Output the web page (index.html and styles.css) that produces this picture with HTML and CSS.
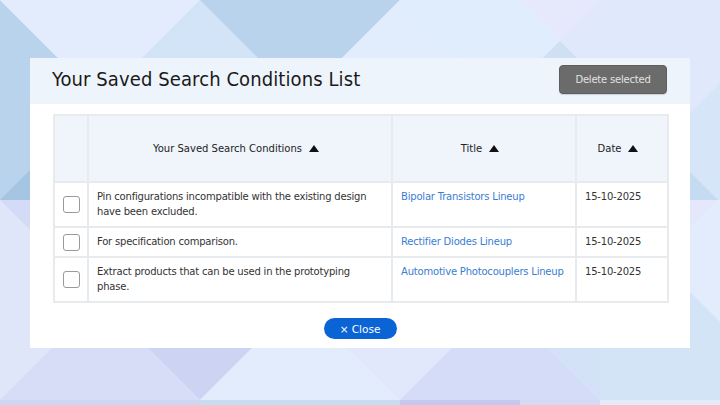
FILE: index.html
```html
<!DOCTYPE html>
<html lang="en">
<head>
<meta charset="utf-8">
<title>Your Saved Search Conditions List</title>
<link rel="stylesheet" href="styles.css">
</head>
<body>
<div class="stage">
  <svg class="backdrop" viewBox="0 0 720 405" width="720" height="405" aria-hidden="true">
    <rect x="0" y="0" width="720" height="405" fill="#dfe6fa"/>
    <rect x="0" y="0" width="720" height="200" fill="#dfe9fb"/>
    <polygon points="0,0 200,200 0,200" fill="#b9d3ec"/>
    <polygon points="0,200 100,100 200,200" fill="#a6c5e2"/>
    <polygon points="0,0 200,0 100,100" fill="#e3ecfc"/>
    <polygon points="200,0 100,100 300,100" fill="#d3e4f8"/>
    <polygon points="200,0 400,0 300,100" fill="#b9d3ec"/>
    <polygon points="400,0 300,100 500,100" fill="#e1ecfc"/>
    <polygon points="400,0 600,0 500,100" fill="#e0edfd"/>
    <polygon points="519,0 601,0 560,41" fill="#e5e9fb"/>
    <polygon points="560,41 500,101 620,101" fill="#cfe0f5"/>
    <polygon points="720,83 603,200 720,200" fill="#d6e5f8"/>
    <polygon points="618,100 718,200 518,200" fill="#c5dbf1"/>
    <rect x="0" y="200" width="720" height="200" fill="#e0e6fa"/>
    <polygon points="0,200 200,200 100,300" fill="#d4dbf6"/>
    <polygon points="100,300 0,400 200,400" fill="#d7ddf7"/>
    <polygon points="100,300 300,300 200,400" fill="#cdd4f3"/>
    <polygon points="300,300 200,400 400,400" fill="#e3ecfd"/>
    <polygon points="300,300 500,300 400,400" fill="#e1e8fb"/>
    <polygon points="500,300 400,400 600,400" fill="#d5dcf7"/>
    <polygon points="500,300 700,300 600,400" fill="#d3e2f6"/>
    <polygon points="600,200 720,200 720,322 600,202" fill="#e2ecfc"/>
    <polygon points="600,200 718,200 600,318" fill="#e5e7fa"/>
    <polygon points="600,202 720,322 720,400 600,400" fill="#d3e4f7"/>
    <rect x="0" y="400" width="200" height="5" fill="#cdd6f3"/>
    <rect x="200" y="400" width="200" height="5" fill="#c6dcf1"/>
    <rect x="400" y="400" width="120" height="5" fill="#c6c9ee"/>
    <rect x="520" y="400" width="80" height="5" fill="#d6d9f6"/>
    <rect x="600" y="400" width="120" height="5" fill="#e4ecfc"/>
  </svg>

  <section class="modal">
    <header class="modal-head">
      <h1 class="modal-title">Your Saved Search Conditions List</h1>
      <button class="btn-delete" type="button">Delete selected</button>
    </header>

    <div class="modal-body">
      <table class="list">
        <colgroup>
          <col class="c-check">
          <col class="c-cond">
          <col class="c-title">
          <col class="c-date">
        </colgroup>
        <thead>
          <tr>
            <th></th>
            <th><span class="sort">Your Saved Search Conditions <i class="tri"></i></span></th>
            <th><span class="sort">Title <i class="tri"></i></span></th>
            <th><span class="sort">Date <i class="tri"></i></span></th>
          </tr>
        </thead>
        <tbody>
          <tr>
            <td class="cb"><span class="box"></span></td>
            <td>Pin configurations incompatible with the existing design have been excluded.</td>
            <td><a class="link" href="#">Bipolar Transistors Lineup</a></td>
            <td>15-10-2025</td>
          </tr>
          <tr>
            <td class="cb"><span class="box"></span></td>
            <td>For specification comparison.</td>
            <td><a class="link" href="#">Rectifier Diodes Lineup</a></td>
            <td>15-10-2025</td>
          </tr>
          <tr>
            <td class="cb"><span class="box"></span></td>
            <td>Extract products that can be used in the prototyping phase.</td>
            <td><a class="link" href="#">Automotive Photocouplers Lineup</a></td>
            <td>15-10-2025</td>
          </tr>
        </tbody>
      </table>

      <div class="foot">
        <button class="btn-close" type="button">× Close</button>
      </div>
    </div>
  </section>
</div>
</body>
</html>
```

FILE: styles.css
```css
* { box-sizing: border-box; }

html, body {
  margin: 0;
  padding: 0;
}

body {
  width: 720px;
  height: 405px;
  overflow: hidden;
  font-family: "DejaVu Sans", "Liberation Sans", sans-serif;
  color: #333;
}

.stage {
  position: relative;
  width: 720px;
  height: 405px;
  padding: 58px 30px 57px 30px;
}

.backdrop {
  position: absolute;
  left: 0;
  top: 0;
  display: block;
}

.modal {
  position: relative;
  width: 660px;
  height: 290px;
  background: #fff;
  display: flex;
  flex-direction: column;
}

.modal-head {
  height: 46px;
  background: #eef4fc;
  display: flex;
  align-items: center;
  justify-content: space-between;
  padding: 0 23px 0 22px;
}

.modal-title {
  margin: 0;
  font-family: "DejaVu Sans Condensed", "DejaVu Sans", sans-serif;
  font-stretch: condensed;
  font-weight: normal;
  font-size: 20px;
  letter-spacing: 0.1px;
  color: #1a1a1a;
  position: relative;
  top: -2px;
}

.btn-delete {
  width: 108px;
  height: 29px;
  margin-top: -3px;
  background: #6b6b6b;
  color: #e2e2e2;
  border: 1px solid #5e5e5e;
  border-radius: 4px;
  font-family: "DejaVu Sans", sans-serif;
  font-size: 10px;
  letter-spacing: -0.2px;
  padding: 0;
  box-shadow: 0 1px 1px rgba(0,0,0,0.15);
}

.modal-body {
  padding: 10px 23px 0 23px;
}

.list {
  width: 614px;
  table-layout: fixed;
  border-collapse: collapse;
  font-size: 10px;
  letter-spacing: -0.2px;
  line-height: 15px;
}

.c-check { width: 34px; }
.c-cond { width: 304px; }
.c-title { width: 184px; }
.c-date { width: 92px; }

.list th,
.list td {
  border: 2px solid #e8ebee;
  vertical-align: top;
  text-align: left;
}

.list th {
  height: 67px;
  background: #f0f5fb;
  font-weight: normal;
  font-size: 10px;
  letter-spacing: 0;
  text-align: center;
  vertical-align: middle;
  color: #222;
  padding: 0 8px 0 0;
}

.list td {
  padding: 6px 8px 7px 8px;
  color: #333;
}

.list td.cb {
  padding: 0;
  vertical-align: middle;
  text-align: center;
}

.box {
  display: inline-block;
  width: 17px;
  height: 17px;
  border: 1.5px solid #9a9a9a;
  border-radius: 3px;
  background: #fff;
  vertical-align: middle;
  margin-left: 1px;
}

.sort {
  display: inline-flex;
  align-items: center;
}

.tri {
  display: inline-block;
  width: 0;
  height: 0;
  margin-left: 7px;
  border-left: 5px solid transparent;
  border-right: 5px solid transparent;
  border-bottom: 7px solid #111;
}

.link {
  color: #3a7dd3;
  text-decoration: none;
}

.foot {
  display: flex;
  justify-content: center;
  padding-top: 15px;
}

.btn-close {
  width: 73px;
  height: 21px;
  border: none;
  border-radius: 11px;
  background: #0a64d6;
  color: #fff;
  font-family: "DejaVu Sans", sans-serif;
  font-size: 10.5px;
  padding: 0;
}
```
